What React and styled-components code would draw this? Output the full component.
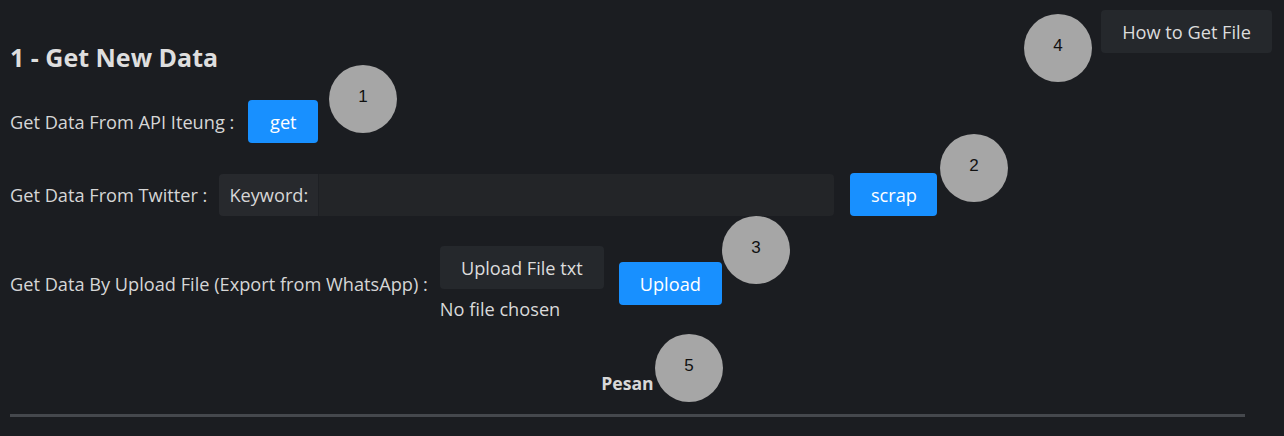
import React from 'react';
import styled, { createGlobalStyle } from 'styled-components';

const Global = createGlobalStyle`
  html, body {
    margin: 0;
    padding: 0;
    background: #1b1d21;
  }
  body {
    font-family: 'Open Sans', 'Liberation Sans', sans-serif;
    color: #d6d6d6;
  }
`;

const Page = styled.div`
  position: relative;
  width: 1284px;
  height: 436px;
  overflow: hidden;
  padding: 10px 12px 0 10px;
  box-sizing: border-box;
`;

const Header = styled.div`
  display: flex;
  justify-content: space-between;
  align-items: flex-start;
`;

const Title = styled.h2`
  margin: 32px 0 0 0;
  font-size: 25px;
  font-weight: 700;
  color: #dedede;
  line-height: 30px;
`;

const Content = styled.div`
  width: 1235px;
`;

const Rows = styled.div`
  display: flex;
  flex-direction: column;
  gap: 30px;
  margin-top: 28px;
`;

const Row = styled.div`
  display: flex;
  align-items: center;
  gap: ${p => p.gap || 14}px;
`;

const Label = styled.span`
  font-size: 18.2px;
  color: #d6d6d6;
  white-space: nowrap;
`;

const Button = styled.button`
  height: 43px;
  min-width: ${p => p.w || 0}px;
  margin-left: ${p => p.shift || 0}px;
  padding: 0 20px;
  border: none;
  border-radius: 4px;
  font-family: inherit;
  font-size: 18.2px;
  cursor: pointer;
  background: ${p => (p.primary ? '#1890ff' : '#25282c')};
  color: ${p => (p.primary ? '#ffffff' : '#dcdcdc')};
`;

const InputGroup = styled.div`
  display: flex;
  width: 615px;
  height: 42px;
  border-radius: 4px;
  overflow: hidden;
`;

const Addon = styled.span`
  display: flex;
  align-items: center;
  padding: 0 10px;
  background: #27292d;
  font-size: 18.2px;
  color: #d6d6d6;
  border-right: 1px solid #1e2024;
`;

const Input = styled.input`
  flex: 1;
  border: none;
  outline: none;
  background: #232528;
  color: #ddd;
  font-family: inherit;
  font-size: 16px;
  padding: 0 10px;
`;

const FileBlock = styled.div`
  display: flex;
  flex-direction: column;
  align-items: flex-start;
  gap: 8px;
`;

const FileNote = styled.span`
  font-size: 18.2px;
  color: #d9d9d9;
`;

const Message = styled.div`
  margin-top: 50px;
  text-align: center;
  font-size: 17.6px;
  font-weight: 700;
  color: #d8d8d8;
`;

const Rule = styled.hr`
  margin: 19px 0 0 0;
  border: none;
  height: 3px;
  background: #45484d;
`;

const Badge = styled.div`
  position: absolute;
  left: ${p => p.x - p.r}px;
  top: ${p => p.y - p.r}px;
  width: ${p => p.r * 2}px;
  height: ${p => p.r * 2}px;
  border-radius: 50%;
  background: #a6a6a6;
  display: flex;
  align-items: center;
  justify-content: center;
  font-family: 'Liberation Sans', sans-serif;
  font-size: 17px;
  color: #111;
  padding-bottom: 4px;
  box-sizing: border-box;
`;

export default function App() {
  return (
    <>
      <Global />
      <Page>
        <Header>
          <Title>1 - Get New Data</Title>
          <Button w={171}>How to Get File</Button>
        </Header>
        <Content>
          <Rows>
            <Row>
              <Label>Get Data From API Iteung :</Label>
              <Button primary w={70}>get</Button>
            </Row>
            <Row gap={12}>
              <Label>Get Data From Twitter :</Label>
              <InputGroup>
                <Addon>Keyword:</Addon>
                <Input />
              </InputGroup>
              <Button primary w={87} shift={4}>scrap</Button>
            </Row>
            <Row gap={12}>
              <Label>Get Data By Upload File (Export from WhatsApp) :</Label>
              <FileBlock>
                <Button w={164}>Upload File txt</Button>
                <FileNote>No file chosen</FileNote>
              </FileBlock>
              <Button primary w={103} shift={3}>Upload</Button>
            </Row>
          </Rows>
          <Message>Pesan</Message>
          <Rule />
        </Content>
        <Badge x={363} y={99} r={34}>1</Badge>
        <Badge x={974} y={168} r={34}>2</Badge>
        <Badge x={756} y={250} r={34}>3</Badge>
        <Badge x={1058} y={48} r={34}>4</Badge>
        <Badge x={689} y={368} r={34}>5</Badge>
      </Page>
    </>
  );
}
